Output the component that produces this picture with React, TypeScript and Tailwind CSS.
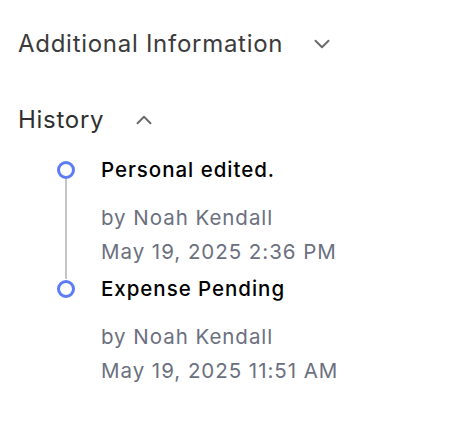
import { ChevronDown, ChevronUp } from "lucide-react";

interface HistoryItem {
  title: string;
  by: string;
  date: string;
}

const items: HistoryItem[] = [
  { title: "Personal edited.", by: "Noah Kendall", date: "May 19, 2025 2:36 PM" },
  { title: "Expense Pending", by: "Noah Kendall", date: "May 19, 2025 11:51 AM" },
];

export default function App() {
  return (
    <div className="w-[466px] h-[444px] bg-white px-[18px] pt-[28px] font-['Inter',sans-serif]">
      {/* Additional Information */}
      <button className="flex items-center text-[24px] leading-[32px] tracking-[0.03em] text-[#3b3b3b]">
        <span>Additional Information</span>
        <ChevronDown size={26} strokeWidth={1.8} className="ml-[26px] text-[#6b6b6b]" />
      </button>

      {/* History */}
      <div className="mt-[44px]">
        <button className="flex items-center text-[24px] leading-[32px] tracking-[0.03em] text-[#2f2f2f]">
          <span>History</span>
          <ChevronUp size={26} strokeWidth={1.8} className="ml-[27px] text-[#6b6b6b]" />
        </button>

        <div className="mt-[24px] pl-[39px]">
          {items.map((item, i) => (
            <div key={i} className="flex gap-[26px]">
              <div className="flex flex-col items-center w-[18px] pt-[1px]">
                <div className="w-[18px] h-[18px] rounded-full border-[3px] border-[#5b7cf6] bg-white shrink-0" />
                {i < items.length - 1 && <div className="w-[2px] flex-1 bg-[#c4c4c4]" />}
              </div>
              <div className="pb-[10px] tracking-[0.06em]">
                <div className="text-[20.5px] leading-[20px] font-medium text-black">{item.title}</div>
                <div className="mt-[21px] text-[20.5px] leading-[34px] text-[#6b7080]">
                  <div>by {item.by}</div>
                  <div>{item.date}</div>
                </div>
              </div>
            </div>
          ))}
        </div>
      </div>
    </div>
  );
}
